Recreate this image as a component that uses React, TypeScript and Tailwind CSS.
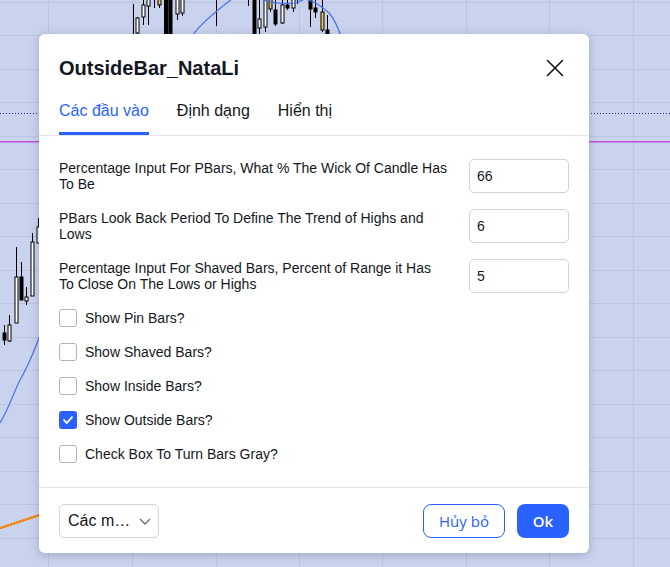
import React from "react";

type Candle = { x: number; wt: number; wb: number; bt?: number; bb?: number; k: "h" | "b" | "y" | "w" };

const topCandles: Candle[] = [
  { x: 133, wt: 4, wb: 34, k: "w" },
  { x: 137, wt: 17, wb: 34, bt: 18, bb: 33, k: "h" },
  { x: 143, wt: -2, wb: 25, bt: 5, bb: 17, k: "h" },
  { x: 148, wt: -2, wb: 25, bt: -2, bb: 6, k: "h" },
  { x: 154, wt: -2, wb: 8, k: "w" },
  { x: 159, wt: -2, wb: 8, bt: -2, bb: 5, k: "y" },
  { x: 164, wt: -2, wb: 34, k: "w" },
  { x: 166, wt: -2, wb: 34, bt: -2, bb: 34, k: "b" },
  { x: 170, wt: -2, wb: 34, bt: -2, bb: 34, k: "b" },
  { x: 177, wt: -2, wb: 20, bt: -2, bb: 14, k: "h" },
  { x: 182, wt: -2, wb: 16, bt: -2, bb: 13, k: "h" },
  { x: 216, wt: -2, wb: 26, k: "w" },
  { x: 248, wt: -2, wb: 6, k: "w" },
  { x: 254, wt: -2, wb: 34, bt: -2, bb: 34, k: "b" },
  { x: 259, wt: -2, wb: 34, bt: 19, bb: 28, k: "h" },
  { x: 265, wt: -2, wb: 32, bt: -2, bb: 27, k: "h" },
  { x: 270, wt: -2, wb: 12, bt: -2, bb: 9, k: "y" },
  { x: 275, wt: -2, wb: 26, bt: 10, bb: 24, k: "b" },
  { x: 282, wt: -2, wb: 24, bt: 5, bb: 23, k: "h" },
  { x: 287, wt: -2, wb: 10, bt: 5, bb: 8, k: "b" },
  { x: 293, wt: -2, wb: 12, bt: -2, bb: 8, k: "h" },
  { x: 297, wt: -2, wb: 4, k: "w" },
  { x: 310, wt: -2, wb: 27, bt: -2, bb: 9, k: "b" },
  { x: 315, wt: -2, wb: 18, bt: 8, bb: 12, k: "b" },
  { x: 322, wt: -2, wb: 32, bt: 12, bb: 30, k: "y" },
  { x: 327, wt: 15, wb: 34, bt: 30, bb: 34, k: "b" },
];

const leftCandles: Candle[] = [
  { x: 4, wt: 325, wb: 345, bt: 333, bb: 340, k: "b" },
  { x: 9, wt: 315, wb: 342, bt: 325, bb: 341, k: "h" },
  { x: 16, wt: 247, wb: 323, bt: 277, bb: 323, k: "h" },
  { x: 21, wt: 262, wb: 300, bt: 277, bb: 300, k: "b" },
  { x: 26, wt: 287, wb: 305, bt: 297, bb: 301, k: "h" },
  { x: 32, wt: 233, wb: 296, bt: 242, bb: 296, k: "h" },
  { x: 38, wt: 218, wb: 243, bt: 227, bb: 243, k: "h" },
];

function CandleShape({ c }: { c: Candle }) {
  return (
    <g>
      <line x1={c.x + 0.5} y1={c.wt} x2={c.x + 0.5} y2={c.wb} stroke="#000" strokeWidth={1} />
      {c.bt !== undefined && c.bb !== undefined && (
        <rect
          x={c.x - 1}
          y={c.bt}
          width={3}
          height={Math.max(1, c.bb - c.bt)}
          fill={c.k === "b" ? "#000" : c.k === "y" ? "#e6c066" : "#fff"}
          stroke="#000"
          strokeWidth={1}
        />
      )}
    </g>
  );
}

function ChartBackground() {
  const vlines = [48, 132, 216, 299, 382, 466, 549, 633];
  const hlines: number[] = [];
  for (let i = 0; i < 17; i++) hlines.push(Math.round(1.5 + 33.5 * i) + 0.5);
  let orange = "M0 528";
  let ox = 0;
  let oy = 528;
  while (ox < 40) {
    ox += 2;
    orange += ` L${ox} ${oy.toFixed(1)}`;
    oy -= 1;
    orange += ` L${ox} ${oy.toFixed(1)}`;
    ox += 1;
    orange += ` L${ox} ${oy.toFixed(1)}`;
  }
  return (
    <svg className="absolute inset-0" width={670} height={567} viewBox="0 0 670 567">
      <rect width={670} height={567} fill="#cad3ee" />
      {vlines.map((x) => (
        <line key={"v" + x} x1={x + 0.5} y1={0} x2={x + 0.5} y2={567} stroke="#bcc6e3" strokeWidth={1} />
      ))}
      {hlines.map((y) => (
        <line key={"h" + y} x1={0} y1={y} x2={670} y2={y} stroke="#bcc6e3" strokeWidth={1} />
      ))}
      <line x1={0} y1={113.5} x2={670} y2={113.5} stroke="#1f2a78" strokeWidth={1} strokeDasharray="1 2" />
      <rect x={0} y={141} width={670} height={1.5} fill="#c24fe0" />
      {topCandles.map((c, i) => (
        <CandleShape key={"t" + i} c={c} />
      ))}
      {leftCandles.map((c, i) => (
        <CandleShape key={"l" + i} c={c} />
      ))}
      <path d="M193 35 C 200 24, 215 12, 232 -1" fill="none" stroke="#4a72e8" strokeWidth={1.2} />
      <path
        d="M262 -1 C 268 3, 285 4, 295 3 C 300 2, 303 -1, 306 -1 C 312 1, 322 6, 330 14 C 335 20, 338 28, 341 36"
        fill="none"
        stroke="#4a72e8"
        strokeWidth={1.2}
      />
      <path d="M0 423 C 8 410, 14 392, 20 380 C 27 368, 34 352, 42 330" fill="none" stroke="#4a72e8" strokeWidth={1.2} />
      <path d={orange} fill="none" stroke="#f08c1e" strokeWidth={2} />
    </svg>
  );
}

function Checkbox({ checked }: { checked?: boolean }) {
  if (checked) {
    return (
      <div className="w-[18px] h-[18px] rounded-[3px] bg-[#2962ff] flex items-center justify-center shrink-0">
        <svg width="12" height="10" viewBox="0 0 12 10">
          <path d="M2 5.2 L4.8 8 L10 2.2" fill="none" stroke="#fff" strokeWidth={1.8} strokeLinecap="round" strokeLinejoin="round" />
        </svg>
      </div>
    );
  }
  return <div className="w-[18px] h-[18px] rounded-[3px] border border-[#b2b5be] bg-white shrink-0" />;
}

function InputRow({ lines, value }: { lines: string[]; value: string }) {
  return (
    <div className="flex items-start justify-between">
      <div className="pt-[1px] text-[14px] leading-[16px] text-[#131722]">
        {lines.map((l, i) => (
          <div key={i}>{l}</div>
        ))}
      </div>
      <div className="w-[100px] h-[34px] border border-[#d1d4dc] rounded-[5px] flex items-center pl-[7px] text-[14px] text-[#131722] shrink-0">
        {value}
      </div>
    </div>
  );
}

function CheckRow({ label, checked }: { label: string; checked?: boolean }) {
  return (
    <div className="flex items-center gap-[8px] h-[18px]">
      <Checkbox checked={checked} />
      <span className="text-[14px] leading-[18px] text-[#131722]">{label}</span>
    </div>
  );
}

export default function App() {
  return (
    <div
      className="relative w-[670px] h-[567px] overflow-hidden bg-[#cad3ee]"
      style={{ fontFamily: '"Liberation Sans", Arial, sans-serif' }}
    >
      <ChartBackground />
      <div className="absolute left-[39px] top-[34px] w-[550px] h-[519px] bg-white rounded-[6px] shadow-[0_2px_10px_rgba(30,40,80,0.25)] flex flex-col">
        <div className="h-[67px] flex items-center justify-between pl-[20px] pr-[19px] pt-[1px]">
          <div className="text-[20px] font-bold text-[#131722] leading-[24px]">OutsideBar_NataLi</div>
          <button className="w-[30px] h-[30px] flex items-center justify-center">
            <svg width="18" height="18" viewBox="0 0 18 18">
              <path d="M1.5 1.5 L16.5 16.5 M16.5 1.5 L1.5 16.5" stroke="#131722" strokeWidth={1.6} strokeLinecap="round" />
            </svg>
          </button>
        </div>
        <div className="h-[35px] border-b border-[#e0e3eb] flex gap-[28px] pl-[20px]">
          <div className="relative h-full text-[16px] leading-[20px] text-[#2962ff]">
            Các đầu vào
            <div className="absolute left-0 right-0 bottom-0 h-[3px] bg-[#2962ff]" />
          </div>
          <div className="h-full text-[16px] leading-[20px] text-[#131722]">Định dạng</div>
          <div className="h-full text-[16px] leading-[20px] text-[#131722]">Hiển thị</div>
        </div>
        <div className="flex-1 flex flex-col gap-[16px] px-[20px] pt-[23px]">
          <InputRow lines={["Percentage Input For PBars, What % The Wick Of Candle Has", "To Be"]} value="66" />
          <InputRow lines={["PBars Look Back Period To Define The Trend of Highs and", "Lows"]} value="6" />
          <InputRow lines={["Percentage Input For Shaved Bars, Percent of Range it Has", "To Close On The Lows or Highs"]} value="5" />
          <CheckRow label="Show Pin Bars?" />
          <CheckRow label="Show Shaved Bars?" />
          <CheckRow label="Show Inside Bars?" />
          <CheckRow label="Show Outside Bars?" checked />
          <CheckRow label="Check Box To Turn Bars Gray?" />
        </div>
        <div className="border-t border-[#e0e3eb] pt-[16px] pb-[15px] px-[20px] flex items-center justify-between">
          <div className="w-[100px] h-[34px] border border-[#d1d4dc] rounded-[5px] flex items-center justify-between pl-[8px] pr-[7px]">
            <span className="text-[16px] text-[#131722]">Các m…</span>
            <svg width="12" height="7" viewBox="0 0 12 7">
              <path d="M1 1 L6 6 L11 1" fill="none" stroke="#6a6d78" strokeWidth={1.3} />
            </svg>
          </div>
          <div className="flex items-center gap-[12px]">
            <button
              className="w-[82px] h-[34px] rounded-[8px] border border-[#2962ff] text-[#2962ff] text-[15px] flex items-center justify-center"
              style={{ fontFamily: '"Open Sans", sans-serif' }}
            >
              Hủy bỏ
            </button>
            <button
              className="w-[52px] h-[34px] rounded-[8px] bg-[#2962ff] text-white text-[15px] font-semibold flex items-center justify-center"
              style={{ fontFamily: '"Open Sans", sans-serif' }}
            >
              Ok
            </button>
          </div>
        </div>
      </div>
    </div>
  );
}
